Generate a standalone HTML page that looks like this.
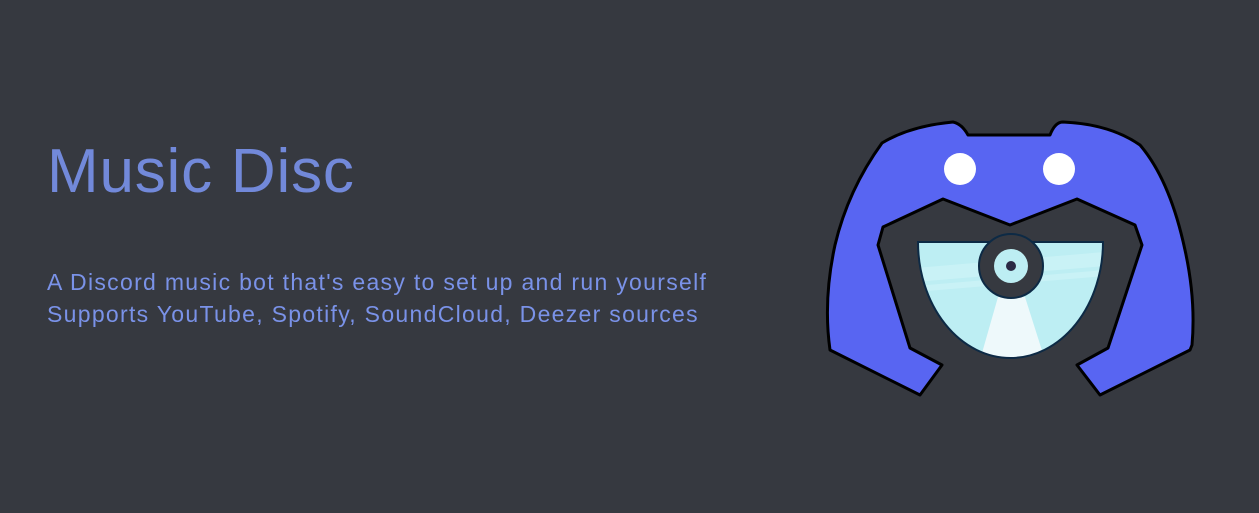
<!DOCTYPE html>
<html><head><style>
html,body{margin:0;padding:0;width:1259px;height:513px;background:#363940;overflow:hidden}
h1{position:absolute;left:47px;top:136px;margin:0;font:400 62px "Liberation Sans",sans-serif;color:#7289da;letter-spacing:0.8px}
p{position:absolute;left:47px;top:266px;margin:0;font:400 23px/32px "Liberation Sans",sans-serif;color:#7a92e8;letter-spacing:1.3px}
svg{position:absolute;left:0;top:0}
</style></head><body>
<h1>Music Disc</h1>
<p>A Discord music bot that's easy to set up and run yourself<br>Supports YouTube, Spotify, SoundCloud, Deezer sources</p>
<svg width="1259" height="513">
<defs><clipPath id="c"><path d="M918 242 L1103 242 A92.5 116 0 0 1 918 242 Z"/></clipPath></defs>
<path d="M953 122 Q962 124 968 135 L1050 135 Q1055 122 1063 122 Q1110 124 1140 145 Q1170 180 1185 250 Q1196 300 1192 345 L1190 350 L1100 395 L1077 365 L1108 348 L1142 245 L1135 225 L1077 199 L1010 225 L943 199 L883 227 L878 245 L910 348 L942 365 L920 395 L830 350 Q823 300 835 245 Q848 190 882 143 Q910 126 953 122 Z" fill="#5865f2" stroke="#000" stroke-width="3" stroke-linejoin="round"/>
<circle cx="960" cy="169" r="16" fill="#fff"/>
<circle cx="1059" cy="169" r="16" fill="#fff"/>
<path d="M918 242 L1103 242 A92.5 116 0 0 1 918 242 Z" fill="#bdeef3"/>
<g clip-path="url(#c)">
<path d="M915 268 L1105 252 L1105 266 L915 282 Z" fill="#c9f2f6"/>
<path d="M915 286 L1105 270 L1105 276 L915 292 Z" fill="#c9f2f6"/>
<path d="M998 297 L1025 297 L1045 360 L980 360 Z" fill="#eef9fb"/>
</g>
<path d="M918 242 L1103 242 A92.5 116 0 0 1 918 242 Z" fill="none" stroke="#0d2a45" stroke-width="2"/>
<circle cx="1011" cy="266" r="32" fill="#363940" stroke="#0d2a45" stroke-width="2"/>
<circle cx="1011" cy="266" r="17" fill="#bdeef3"/>
<circle cx="1011" cy="266" r="5" fill="#2b2a45"/>
</svg>
</body></html>
